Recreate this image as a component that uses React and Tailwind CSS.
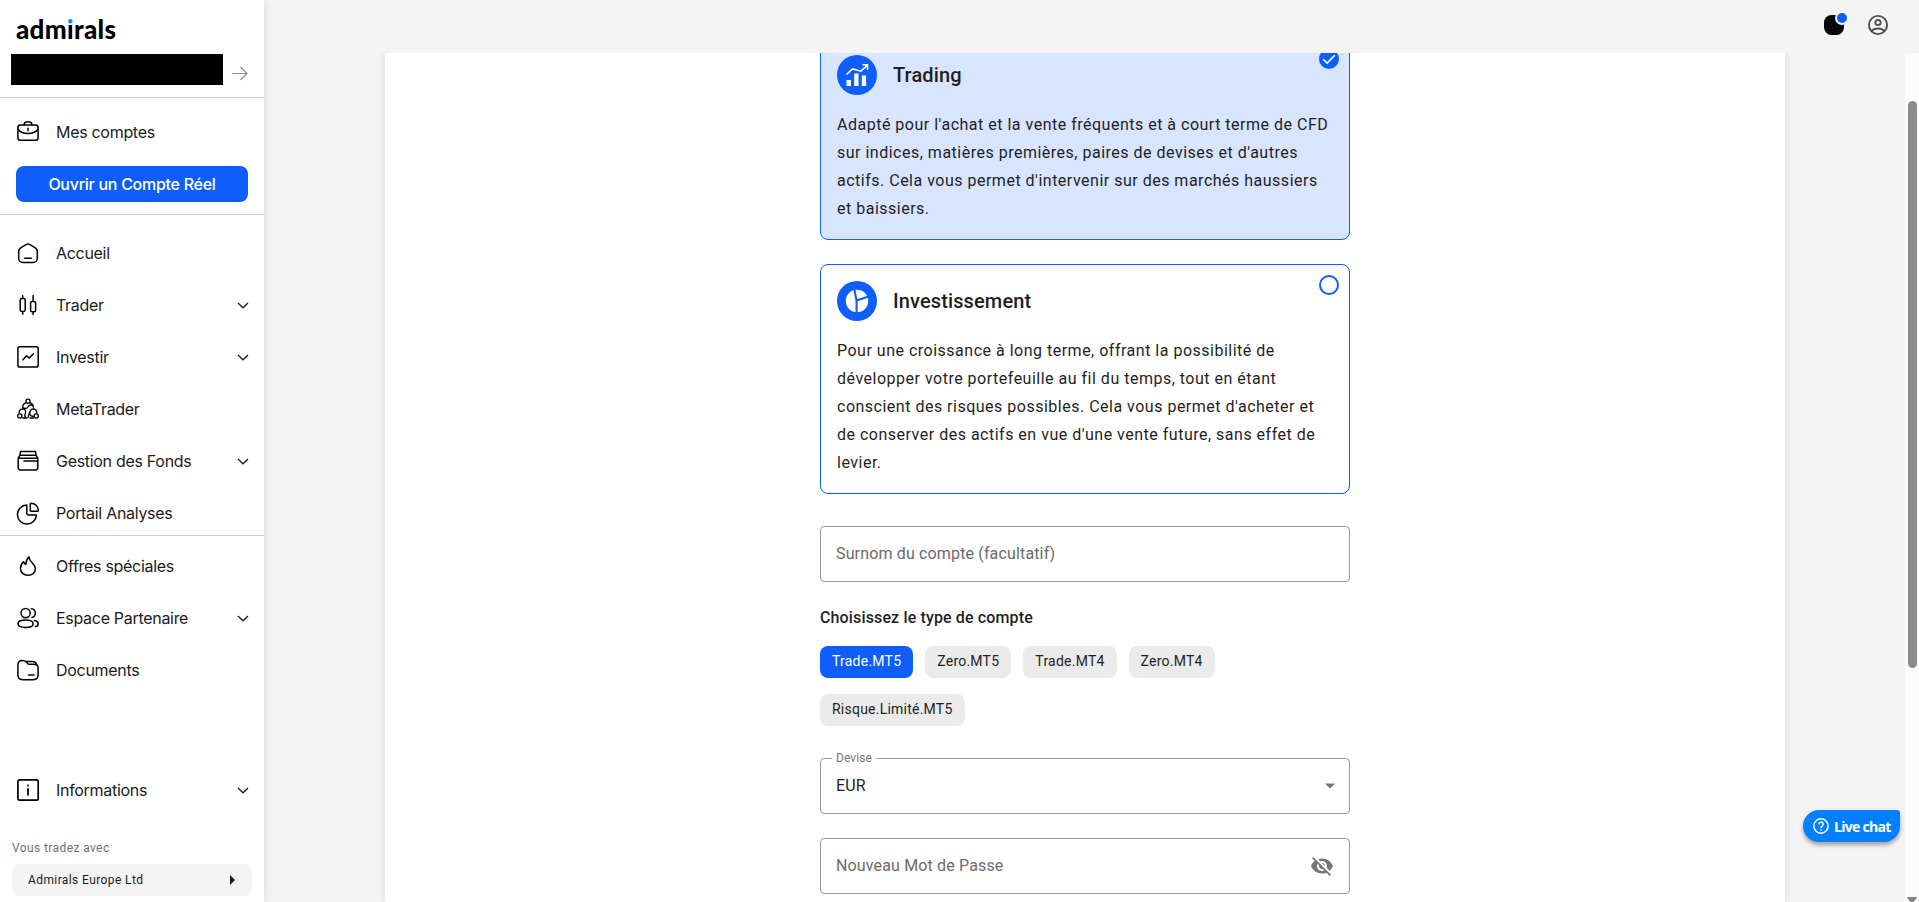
import React from 'react';

const inter = "font-['Inter','Liberation_Sans',sans-serif]";
const roboto = "font-['Roboto','Liberation_Sans',sans-serif]";

function Svg({ children, size = 24, sw = 1.5, className = '' }) {
  return (
    <svg
      width={size}
      height={size}
      viewBox={`0 0 ${size} ${size}`}
      fill="none"
      stroke="currentColor"
      strokeWidth={sw}
      strokeLinecap="round"
      strokeLinejoin="round"
      className={`shrink-0 ${className}`}
    >
      {children}
    </svg>
  );
}

const icons = {
  accounts: (
    <>
      <rect x="1.9" y="5" width="20.2" height="15.3" rx="2.6" />
      <path d="M8.2 5V4.2A2.2 2.2 0 0 1 10.4 2h3.2a2.2 2.2 0 0 1 2.2 2.2V5M2 9.3c1.8 2.4 5.6 4.2 10 4.2s8.200-1.800 10-4.200M12 8.200v2.600" />
    </>
  ),
  home: (
    <>
      <path d="M2.700 10.300a4 4 0 0 1 2-3.460l5.300-3.200a4 4 0 0 1 4 0l5.300 3.200a4 4 0 0 1 2 3.460V17.200a4.300 4.300 0 0 1-4.300 4.300H7a4.300 4.300 0 0 1-4.300-4.300z" />
      <path d="M8.700 17.300h6.600" />
    </>
  ),
  candles: (
    <>
      <rect x="4.200" y="5.400" width="5" height="13" rx="1.600" />
      <rect x="14.600" y="8.400" width="5" height="10.400" rx="1.600" />
      <path d="M6.700 2.800v2.600M6.700 18.400v2.800M17.100 2.600v5.800M17.100 18.800v2.600" />
    </>
  ),
  invest: (
    <>
      <rect x="1.900" y="1.800" width="20.300" height="20.300" rx="1.800" />
      <path d="M7 14.800l3.500-4 2.700 2.200L17.200 8.900" />
    </>
  ),
  meta: (
    <g strokeWidth="1.350">
      <circle cx="12" cy="4.200" r="2.100" />
      <circle cx="3.800" cy="19" r="2.100" />
      <circle cx="20.200" cy="19" r="2.100" />
      <path d="M9.600 5.800C7.400 6.700 6.400 8.400 6.900 10.600c1.700 1.500 4.200 1 5.200-.9.900-1.500 2.300-2 4-1.500M14.400 5.800c2 .9 3 2.500 2.900 4.500M3.200 16c-.3-2.300 1-4 3.200-4.200 2.700.1 4 2.300 3 4.400-.9 1.800-.5 3.800 1 4.800M20.800 16c.2-2.400-1.300-4.200-3.600-4.200-2.200.1-3 1.500-3.500 3.300l-1.800 5.800M17.300 19.400c-2.500-.1-3.900-1.500-3.400-3.700M6.800 21h3.600M14 21h3.400" />
    </g>
  ),
  funds: (
    <>
      <path d="M2.200 9.200h19.600v9.600a2.300 2.300 0 0 1-2.300 2.300H4.500a2.300 2.300 0 0 1-2.300-2.300zM2.200 9.200l1.800-3h16l1.800 3M4 6.200l.5-3.600h15l.5 3.600M7.900 12.100h13.600" />
    </>
  ),
  pie: (
    <>
      <path d="M10.800 4.100v8.400a1.400 1.400 0 0 0 1.400 1.400h8.200a9.500 9.500 0 1 1-9.600-9.800z" />
      <path d="M15 2.300c4 0 7.300 3 7.300 7.100 0 .6-.4.900-.9.900H15.200a.9.900 0 0 1-.9-.9V3.100c0-.5.200-.8.700-.8z" />
    </>
  ),
  fire: <path d="M12.900 2.700c.2 2.900 1.700 4.600 3.600 6.600 1.700 1.800 2.900 3.400 2.900 5.500 0 3.800-3.200 6.500-7.400 6.500s-7.500-2.700-7.500-6.800c0-2.700 1.200-5 3-6.700.5 1.300 1.200 2.100 2.300 2.700.1-3 .8-5.500 3.100-7.800z" />,
  users: (
    <>
      <circle cx="9.600" cy="7.100" r="4.600" />
      <path d="M2 17.800c0-2.600 3.300-3.700 7.600-3.700s7.500 1.100 7.500 3.800-3.200 3.500-7.500 3.500S2 20.500 2 17.800zM15.400 2.700a4.500 4.500 0 0 1 .6 8.800M18.300 14.600c2.300.4 3.900 1.500 3.900 3.300 0 1.500-1 2.300-2.600 2.700" />
    </>
  ),
  docs: (
    <>
      <path d="M22.100 9.800v7.300c0 3.200-1.600 4.600-4.800 4.600H6.700c-3.200 0-4.800-1.400-4.800-4.600V7.200c0-3.200 1.400-4.800 4.300-4.800 2.300 0 3 .1 4 1.400l1.300 1.600c.6.700 1 .8 1.900.8h4.200c3 0 4.500 1 4.500 3.600zM9.500 3.400h6.800c2.400 0 3.900.8 4.500 3.400" />
      <path d="M12.700 16.900h5.300" />
    </>
  ),
  info: (
    <>
      <rect x="1.900" y="1.900" width="20.300" height="20.300" rx="1.800" strokeWidth="1.700" />
      <path d="M12 11v5.800M12 7.400v.4" strokeWidth="1.800" />
    </>
  ),
};

function NavItem({ icon, label, more }) {
  return (
    <div className="flex h-[52px] shrink-0 items-center pl-4 pr-3.5">
      <Svg>{icons[icon]}</Svg>
      <span className={`ml-4 flex-1 whitespace-nowrap text-[16px] leading-6 tracking-[-0.3px] text-[#1b1b1b] ${inter}`}>{label}</span>
      {more && (
        <svg width="14" height="14" viewBox="0 0 14 14" fill="none" stroke="#1b1b1b" strokeWidth="1.300" className="shrink-0">
          <path d="M2 5l5 4.800L12 5" />
        </svg>
      )}
    </div>
  );
}

function Sidebar() {
  return (
    <aside className="z-10 flex w-[264px] shrink-0 flex-col bg-white shadow-[0_0_10px_rgba(0,0,0,0.12)]">
      <div className="flex h-[98px] flex-col border-b border-[#cdced6] pl-[11px]">
        <div className="flex h-[54px] items-start pl-[5px] pt-[13px] font-['Lato',sans-serif] text-[26px] font-black leading-[32px] tracking-[0.3px] text-black">
          <span>adm</span>
          <span className="bg-[linear-gradient(#0a84ff_0px,#0a84ff_12.500px,#000_12.500px)] bg-clip-text text-transparent">i</span>
          <span>rals</span>
        </div>
        <div className="flex">
          <div className="h-[31px] w-[212px] bg-black" />
          <svg width="16" height="16" viewBox="0 0 16 16" fill="none" stroke="#8b8f8e" strokeWidth="1.200" className="ml-[9px] mt-[12px]">
            <path d="M0 7.500h15M8.500 1l6.500 6.500L8.500 14" />
          </svg>
        </div>
      </div>
      <div className="flex h-[117px] flex-col border-b border-[#cdced6] pt-2">
        <NavItem icon="accounts" label="Mes comptes" />
        <button className={`mx-4 mt-2 h-9 shrink-0 rounded-lg bg-[#0f5efa] text-[16px] font-medium tracking-[-0.27px] text-white ${inter}`}>
          Ouvrir un Compte Réel
        </button>
      </div>
      <div className="flex h-[321px] flex-col border-b border-[#cdced6] pt-3">
        <NavItem icon="home" label="Accueil" />
        <NavItem icon="candles" label="Trader" more />
        <NavItem icon="invest" label="Investir" more />
        <NavItem icon="meta" label="MetaTrader" />
        <NavItem icon="funds" label="Gestion des Fonds" more />
        <NavItem icon="pie" label="Portail Analyses" />
      </div>
      <div className="flex flex-col pt-1">
        <NavItem icon="fire" label="Offres spéciales" />
        <NavItem icon="users" label="Espace Partenaire" more />
        <NavItem icon="docs" label="Documents" />
      </div>
      <div className="mt-[68px]">
        <NavItem icon="info" label="Informations" more />
      </div>
      <div className={`mt-[22px] px-3 text-[12px] ${roboto}`}>
        <div className="h-[26px] leading-[20px] tracking-[0.4px] text-[#6f7274]">Vous tradez avec</div>
        <div className="flex h-8 items-center justify-between rounded-lg bg-[#f4f4f4] pl-4 pr-[17px] tracking-[0.4px] text-[#1b1b1b]">
          <span>Admirals Europe Ltd</span>
          <svg width="5" height="10" viewBox="0 0 5 10" fill="#1b1b1b">
            <path d="M0 0l5 5-5 5z" />
          </svg>
        </div>
      </div>
    </aside>
  );
}

function OptionCard({ selected, icon, title, children }) {
  return (
    <section className={`relative rounded-lg border border-[#0f5efa] p-4 ${selected ? 'bg-[#d9e4ff]' : 'bg-white'}`}>
      <div className="flex items-center gap-4">
        <div className="flex size-10 items-center justify-center rounded-full bg-[#0f5efa]">{icon}</div>
        <h2 className="text-[20px] font-medium leading-8 tracking-[0.12px] text-[#1f1f1f]">{title}</h2>
      </div>
      <p className="mt-4 whitespace-nowrap text-[16px] leading-7 tracking-[0.5px] text-[#1f1f1f]">{children}</p>
      <div className={`absolute right-[10px] top-[10px] flex size-5 items-center justify-center rounded-full ${selected ? 'bg-[#0f5efa]' : 'border-2 border-[#0f5efa]'}`}>
        {selected && (
          <svg width="14" height="14" viewBox="0 0 14 14" fill="none" stroke="#fff" strokeWidth="1.600">
            <path d="M1.200 7.200l3.900 3.900L12.800 3.300" />
          </svg>
        )}
      </div>
    </section>
  );
}

function Chip({ active, children }) {
  return (
    <button className={`h-8 rounded-lg px-3 pb-[2px] text-[14px] tracking-[0.23px] ${active ? 'bg-[#0f5efa] text-white' : 'bg-[#ebebeb] text-[#1f1f1f]'}`}>
      {children}
    </button>
  );
}

const fieldClass = 'flex h-14 items-center rounded border border-[#979797] pl-[15px] text-[16px] tracking-[0.15px]';

function Form() {
  return (
    <div className={`mt-[-15px] w-[530px] ${roboto}`}>
      <OptionCard
        selected
        title="Trading"
        icon={
          <svg width="24" height="26" viewBox="0 0 24 26" fill="none" stroke="#fff" strokeWidth="1.600">
            <path d="M1.500 12.500l6-5.500 8.500 2.200L22 3.500M17.500 2.800h5v5" />
            <path d="M1.500 18h4.500v6h-4.500zM9.200 11.500h4.300V24h-4.300zM16.800 13.500h4.300V24h-4.300z" fill="#fff" stroke="none" />
          </svg>
        }
      >
        Adapté pour l'achat et la vente fréquents et à court terme de CFD<br />
        sur indices, matières premières, paires de devises et d'autres<br />
        actifs. Cela vous permet d'intervenir sur des marchés haussiers<br />
        et baissiers.
      </OptionCard>
      <div className="h-6" />
      <OptionCard
        title="Investissement"
        icon={
          <svg width="24" height="24" viewBox="0 0 24 24">
            <circle cx="12" cy="12" r="11.200" fill="#fff" />
            <path d="M9.300 0l2.300 12V24M11.600 11.500l12-4" fill="none" stroke="#0f5efa" strokeWidth="2.100" />
          </svg>
        }
      >
        Pour une croissance à long terme, offrant la possibilité de<br />
        développer votre portefeuille au fil du temps, tout en étant<br />
        conscient des risques possibles. Cela vous permet d'acheter et<br />
        de conserver des actifs en vue d'une vente future, sans effet de<br />
        levier.
      </OptionCard>

      <div className={`mt-8 text-[#6b6b6b] ${fieldClass}`}>Surnom du compte (facultatif)</div>

      <h3 className="mt-6 text-[16px] font-medium leading-6 tracking-[0.14px] text-[#1f1f1f]">Choisissez le type de compte</h3>
      <div className="mt-4 flex w-[450px] flex-wrap gap-x-3 gap-y-4">
        <Chip active>Trade.MT5</Chip>
        <Chip>Zero.MT5</Chip>
        <Chip>Trade.MT4</Chip>
        <Chip>Zero.MT4</Chip>
        <Chip>Risque.Limité.MT5</Chip>
      </div>

      <div className={`relative mt-8 justify-between pr-[13px] text-[#1f1f2b] ${fieldClass}`}>
        <span className="absolute -top-[9px] left-[11px] bg-white px-1 text-[12px] leading-4 tracking-[0.1px] text-[#757575]">Devise</span>
        <span>EUR</span>
        <svg width="12" height="6" viewBox="0 0 12 6" fill="#757575">
          <path d="M1 .5h10L6 5.500z" />
        </svg>
      </div>

      <div className={`mt-6 justify-between pr-[15px] text-[#6b6b6b] ${fieldClass}`}>
        <span>Nouveau Mot de Passe</span>
        <svg width="24" height="24" viewBox="0 0 24 24" fill="#757575">
          <path d="M12 7c2.760 0 5 2.240 5 5 0 .65-.13 1.260-.36 1.830l2.920 2.920c1.510-1.260 2.700-2.890 3.430-4.750-1.730-4.390-6-7.500-11-7.500-1.400 0-2.740.25-3.980.7l2.160 2.160C10.740 7.130 11.350 7 12 7zM2 4.270l2.280 2.280.46.46C3.080 8.300 1.780 10.020 1 12c1.730 4.390 6 7.500 11 7.500 1.550 0 3.030-.3 4.380-.84l.42.42L19.730 22 21 20.730 3.270 3 2 4.270zM7.530 9.800l1.550 1.550c-.05.21-.08.43-.08.65 0 1.660 1.340 3 3 3 .22 0 .44-.03.65-.08l1.550 1.550c-.67.33-1.410.53-2.200.53-2.760 0-5-2.240-5-5 0-.79.2-1.530.53-2.200zm4.310-.78l3.150 3.150.02-.16c0-1.660-1.340-3-3-3l-.17.01z" />
        </svg>
      </div>
    </div>
  );
}

function Header() {
  return (
    <header className="flex h-[53px] shrink-0 items-start justify-end gap-[18px] bg-[#f4f4f4] pr-[29px] pt-[13px]">
      <svg width="26" height="24" viewBox="0 0 26 24">
        <rect x="2" y="2" width="20" height="20" rx="7.500" fill="#07070b" />
        <circle cx="20" cy="5" r="7" fill="#f4f4f4" />
        <circle cx="20" cy="5" r="5" fill="#0f5efa" />
      </svg>
      <svg width="24" height="24" viewBox="0 0 24 24" fill="none" stroke="#4f4f4f" strokeWidth="1.900">
        <circle cx="12" cy="12" r="9.100" />
        <circle cx="12" cy="9.500" r="2.600" />
        <path d="M5.500 18.200c1.500-1.800 4-2.700 6.500-2.700s5 .9 6.500 2.700" />
      </svg>
    </header>
  );
}

export default function App() {
  return (
    <div className="relative flex h-[902px] w-[1919px] overflow-hidden bg-[#f4f4f4]">
      <Sidebar />
      <div className="flex min-w-0 flex-1 flex-col">
        <Header />
        <div className="flex min-h-0 flex-1 overflow-hidden">
          <main className="flex min-w-0 flex-1 pl-[121px]">
            <div className="flex w-[1400px] justify-center bg-white shadow-[0_0_8px_rgba(0,0,0,0.12)]">
              <Form />
            </div>
          </main>
          <div className="flex w-[14px] flex-col items-center justify-between bg-[#fcfcfc] pt-12">
            <div className="h-[567px] w-[9px] rounded-full bg-[#8b8b8b]" />
            <svg width="10" height="5" viewBox="0 0 10 5" fill="#858585">
              <path d="M.5 0h9v1.500L6.500 5h-3L.5 1.500z" />
            </svg>
          </div>
        </div>
      </div>
      <button className="absolute left-[1803px] top-[810px] flex h-8 w-[97px] items-center rounded-b-[16px] rounded-tl-[16px] rounded-tr-[3px] bg-[#0080ff] pl-[10px] font-['Open_Sans','Noto_Sans',sans-serif] text-[14px] font-bold tracking-[-0.7px] text-white shadow-[0_3px_4px_rgba(0,0,0,0.35)]">
        <svg width="16" height="16" viewBox="0 0 16 16" fill="none" stroke="#fff" strokeWidth="1.500" className="mr-[5px] shrink-0">
          <circle cx="8" cy="8" r="7.200" />
          <path d="M5.800 6.300a2.200 2.200 0 1 1 3.300 1.900c-.8.500-1.100.8-1.100 1.700M8 11.200v1.400" />
        </svg>
        <span className="whitespace-nowrap">Live chat</span>
      </button>
    </div>
  );
}
